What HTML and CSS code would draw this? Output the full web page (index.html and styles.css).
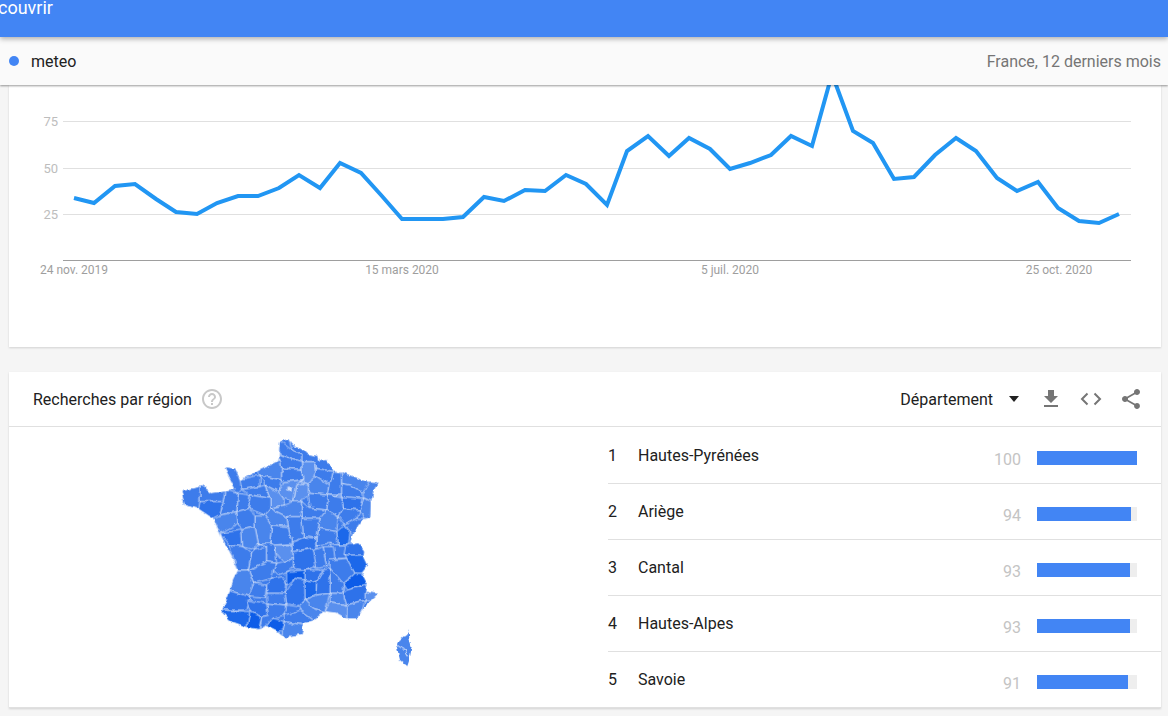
FILE: index.html
```html
<!DOCTYPE html>
<html lang="fr">
<head>
<meta charset="utf-8">
<title>Google Trends</title>
<link rel="stylesheet" href="styles.css">
</head>
<body>
<header class="topbar"><span class="topbar-title">couvrir</span></header>
<div class="termbar">
  <div class="term"><span class="term-dot"></span><span class="term-name">meteo</span></div>
  <div class="term-scope">France, 12 derniers mois</div>
</div>
<main class="page">
  <section class="card chart-card">
    <svg class="chart" width="1152" height="262" viewBox="9 85 1152 262">
      <line class="grid" x1="63" y1="121.5" x2="1131" y2="121.5"/>
      <line class="grid" x1="63" y1="168.5" x2="1131" y2="168.5"/>
      <line class="grid" x1="63" y1="214.5" x2="1131" y2="214.5"/>
      <line class="axis" x1="63" y1="260.5" x2="1131" y2="260.5"/>
      <text class="ylab" x="58" y="126">75</text>
      <text class="ylab" x="58" y="173">50</text>
      <text class="ylab" x="58" y="219">25</text>
      <text class="xlab" x="74" y="274">24 nov. 2019</text>
      <text class="xlab" x="402" y="274">15 mars 2020</text>
      <text class="xlab" x="730" y="274">5 juil. 2020</text>
      <text class="xlab" x="1059" y="274">25 oct. 2020</text>
      <polyline class="trend" points="74,198 94,203 115,186 135,184 156,199 176,212 197,214 217,203 238,196 258,196 279,188 299,175 320,188 340,163 361,173 381,195 402,219 422,219 443,219 463,217 484,197 504,201 525,190 545,191 566,175 586,184 607,205 627,151 648,136 669,156 689,138 710,149 730,169 750,163 771,155 791,136 812,146 832,74 853,131 873,143 894,179 914,177 935,155 956,138 976,151 997,178 1017,191 1038,182 1058,208 1079,221 1099,223 1119,214"/>
    </svg>
  </section>
  <section class="card region-card">
    <div class="region-head">
      <div class="region-title"><span>Recherches par région</span>
        <svg class="icon help" viewBox="0 0 24 24"><path d="M11 18h2v-2h-2v2zm1-16C6.48 2 2 6.48 2 12s4.48 10 10 10 10-4.48 10-10S17.52 2 12 2zm0 18c-4.41 0-8-3.59-8-8s3.59-8 8-8 8 3.59 8 8-3.59 8-8 8zm0-14c-2.21 0-4 1.79-4 4h2c0-1.1.9-2 2-2s2 .9 2 2c0 2-3 1.75-3 5h2c0-2.25 3-2.5 3-5 0-2.21-1.79-4-4-4z"/></svg>
      </div>
      <div class="region-tools">
        <span class="select-label">Département</span><span class="caret"></span>
        <svg class="icon tool" viewBox="0 0 24 24"><path d="M19 9h-4V3H9v6H5l7 7 7-7zM5 18v2h14v-2H5z"/></svg>
        <svg class="icon tool code" viewBox="0 0 24 24"><path d="M8.500 6.500 3 12l5.500 5.500M15.500 6.500 21 12l-5.500 5.500"/></svg>
        <svg class="icon tool" viewBox="0 0 24 24"><path d="M18 16.080c-.76 0-1.440.3-1.960.77L8.910 12.700c.05-.23.09-.46.09-.7s-.04-.47-.09-.7l7.050-4.110c.54.5 1.250.81 2.040.81 1.660 0 3-1.340 3-3s-1.340-3-3-3-3 1.340-3 3c0 .24.04.47.09.7L8.040 9.810C7.500 9.310 6.790 9 6 9c-1.660 0-3 1.340-3 3s1.340 3 3 3c.79 0 1.500-.31 2.040-.81l7.120 4.160c-.05.21-.08.43-.08.65 0 1.610 1.310 2.920 2.920 2.920 1.610 0 2.920-1.310 2.920-2.920s-1.310-2.920-2.920-2.920z"/></svg>
      </div>
    </div>
    <div class="region-body">
      <div class="map-pane">
        <svg class="map" width="260" height="240" viewBox="0 0 780 720">
          <defs>
            <filter id="wiggle" x="-5%" y="-5%" width="110%" height="110%">
              <feTurbulence type="fractalNoise" baseFrequency="0.045" numOctaves="3" seed="4"/>
              <feDisplacementMap in="SourceGraphic" scale="14" xChannelSelector="R" yChannelSelector="G"/>
            </filter>
            <clipPath id="fr"><path d="M330,35 345,30 355,28 368,45 395,55 412,72 440,78 445,95 468,90 490,125 520,128 560,145 590,155 622,157 610,185 602,215 600,262 575,270 545,320 540,345 565,340 582,362 580,380 592,405 575,430 590,460 585,485 625,492 605,510 585,530 560,565 530,565 500,548 465,543 430,570 400,580 395,615 345,622 320,600 290,585 270,598 230,590 180,572 155,545 175,500 190,450 205,420 180,370 150,310 130,265 85,235 45,225 35,185 90,170 100,168 125,190 165,185 197,178 165,113 195,116 210,150 262,125 325,95Z"/></clipPath>
          </defs>
          <g filter="url(#wiggle)">
          <g class="depts" clip-path="url(#fr)">
            <path class="d3" d="M0,0H780V720H0Z"/>
            <polygon class="d3" points="355,20 400,50 440,70 475,85 490,125 440,115 435,95 395,95 395,72 365,60"/>
            <polygon class="d3" points="320,25 365,60 395,72 395,95 330,72"/>
            <polygon class="d3" points="325,72 395,95 395,118 335,115"/>
            <polygon class="d2" points="255,120 330,90 335,115 335,150 270,135"/>
            <polygon class="d1" points="395,95 435,95 440,135 415,165 398,160"/>
            <polygon class="d3" points="335,115 395,118 398,150 345,155 335,150"/>
            <polygon class="d3" points="440,115 490,125 480,165 435,135"/>
            <polygon class="d2" points="435,135 480,165 475,195 415,190 415,165"/>
            <polygon class="d3" points="490,125 515,130 515,195 475,195 480,165"/>
            <polygon class="d3" points="515,160 540,165 585,190 580,205 515,200"/>
            <polygon class="d2" points="515,125 560,140 600,155 585,190 540,165 515,160"/>
            <polygon class="d2" points="600,150 630,150 605,215 585,205 575,195"/>
            <polygon class="d2" points="580,205 610,215 605,268 580,265 570,240"/>
            <polygon class="d4" points="515,200 580,205 570,240 520,235"/>
            <polygon class="d3" points="475,195 515,200 520,235 505,260 470,240"/>
            <polygon class="d3" points="415,190 475,195 470,240 420,235"/>
            <polygon class="d1" points="398,160 415,165 415,190 395,215 370,220 380,165"/>
            <polygon class="d1" points="345,155 398,150 380,165 370,215 340,205 325,185"/>
            <polygon class="d3" points="270,135 335,150 325,185 285,165"/>
            <polygon class="d3" points="205,150 270,135 270,170 215,178"/>
            <polygon class="d3" points="155,105 200,105 210,150 215,178 205,190 190,178"/>
            <polygon class="d3" points="215,178 270,170 285,165 300,205 240,195"/>
            <polygon class="d1" points="285,165 325,185 340,205 345,225 300,235 300,205"/>
            <polygon class="d2" points="345,225 370,215 395,215 395,260 350,260 300,235"/>
            <polygon class="d3" points="395,215 420,235 470,240 450,265 395,265"/>
            <polygon class="d2" points="470,240 505,260 500,305 445,295 450,265"/>
            <polygon class="d3" points="505,260 520,235 570,240 560,265 525,285"/>
            <polygon class="d3" points="525,285 560,265 585,265 550,320 540,305"/>
            <polygon class="d5" points="500,305 525,285 540,305 535,345 505,345"/>
            <polygon class="d3" points="480,340 505,345 535,345 530,385 495,385"/>
            <polygon class="d3" points="445,295 500,305 505,345 480,340 440,345"/>
            <polygon class="d3" points="395,265 450,265 445,295 440,325 400,320"/>
            <polygon class="d3" points="350,260 395,260 400,320 365,340 355,290"/>
            <polygon class="d2" points="300,235 350,260 355,290 305,285 285,255"/>
            <polygon class="d2" points="255,255 285,255 305,285 300,340 265,340 255,290"/>
            <polygon class="d3" points="240,195 300,205 300,235 285,255 235,235"/>
            <polygon class="d3" points="205,190 240,195 235,235 200,245"/>
            <polygon class="d3" points="30,175 90,165 90,225 85,240 30,230"/>
            <polygon class="d3" points="90,165 125,185 165,180 160,215 90,215"/>
            <polygon class="d4" points="90,215 160,215 150,255 135,270 85,240"/>
            <polygon class="d3" points="165,180 205,190 200,245 150,255 160,215"/>
            <polygon class="d2" points="130,265 150,255 200,245 205,280 150,310"/>
            <polygon class="d3" points="200,245 235,235 255,255 255,290 215,300 205,280"/>
            <polygon class="d4" points="150,310 215,300 218,350 180,345"/>
            <polygon class="d2" points="215,300 255,290 265,340 255,360 218,350"/>
            <polygon class="d3" points="180,345 218,350 245,370 235,420 205,420 185,370"/>
            <polygon class="d3" points="245,370 255,360 290,350 290,395 235,420"/>
            <polygon class="d3" points="265,340 300,340 315,345 320,400 290,395 290,350"/>
            <polygon class="d1" points="315,345 365,345 370,385 340,395 320,370"/>
            <polygon class="d3" points="305,285 355,290 365,340 315,345 300,340"/>
            <polygon class="d4" points="365,340 400,320 440,325 440,360 420,355 370,365"/>
            <polygon class="d4" points="370,365 430,355 440,410 405,420 370,415"/>
            <polygon class="d3" points="320,400 340,395 370,385 370,415 350,425 325,435 310,420"/>
            <polygon class="d3" points="235,420 290,395 320,400 310,420 305,445 250,460"/>
            <polygon class="d2" points="180,440 205,420 235,420 250,460 240,500 170,480"/>
            <polygon class="d4" points="170,480 240,500 230,540 150,540"/>
            <polygon class="d5" points="150,540 240,545 230,595 175,575"/>
            <polygon class="d6" points="240,545 275,560 265,600 230,595"/>
            <polygon class="d4" points="230,510 290,520 295,555 275,560 240,545"/>
            <polygon class="d3" points="250,460 290,465 285,505 235,500"/>
            <polygon class="d4" points="305,445 340,440 350,465 345,490 290,490 290,465"/>
            <polygon class="d6" points="350,425 405,420 405,450 375,445 350,465"/>
            <polygon class="d4" points="345,490 375,445 405,450 405,510 385,530 350,525"/>
            <polygon class="d5" points="405,450 440,455 438,495 405,510"/>
            <polygon class="d4" points="405,420 460,420 440,455 405,450"/>
            <polygon class="d3" points="430,360 460,350 470,410 440,415"/>
            <polygon class="d3" points="460,350 490,350 495,385 470,410"/>
            <polygon class="d3" points="480,390 530,385 555,430 520,460 480,415"/>
            <polygon class="d5" points="525,375 590,375 595,405 575,430 555,430"/>
            <polygon class="d4" points="530,345 570,335 590,375 525,375"/>
            <polygon class="d6" points="520,465 555,430 575,430 595,460 530,480"/>
            <polygon class="d3" points="480,415 520,460 520,490 480,490"/>
            <polygon class="d4" points="460,420 480,415 480,490 438,495 440,455"/>
            <polygon class="d2" points="405,510 438,495 480,490 465,545 430,535"/>
            <polygon class="d2" points="480,490 520,490 530,525 480,515"/>
            <polygon class="d4" points="520,490 530,480 590,465 585,510 530,525"/>
            <polygon class="d1" points="585,485 630,490 605,515 585,510"/>
            <polygon class="d2" points="530,525 585,510 565,570 530,570"/>
            <polygon class="d1" points="465,545 480,515 530,525 530,570 500,550"/>
            <polygon class="d2" points="385,530 405,510 430,535 465,545 430,570 390,540"/>
            <polygon class="d3" points="290,490 345,490 350,525 290,520"/>
            <polygon class="d3" points="290,520 350,525 345,555 305,565 290,585 270,598 275,560 295,555"/>
            <polygon class="d6" points="290,585 305,565 345,575 340,600 320,605"/>
            <polygon class="d3" points="345,555 390,540 430,570 400,585 345,575"/>
            <polygon class="d2" points="340,600 345,575 400,585 400,625 340,630"/>
          </g>
          <path class="corsica" d="M715,598 718,625 725,650 718,690 712,708 690,690 678,640 700,620 712,615Z"/>
          <path class="corsica-line" d="M680,645 705,660 716,678"/>
          <path class="paris" d="M352,170h16v12h-16z"/>
          </g>
        </svg>
      </div>
      <ol class="ranking">
        <li class="rank-row"><span class="rank">1</span><span class="place">Hautes-Pyrénées</span><span class="score">100</span><span class="bar"><span class="bar-fill" style="width:100%"></span></span></li>
        <li class="rank-row"><span class="rank">2</span><span class="place">Ariège</span><span class="score">94</span><span class="bar"><span class="bar-fill" style="width:94%"></span></span></li>
        <li class="rank-row"><span class="rank">3</span><span class="place">Cantal</span><span class="score">93</span><span class="bar"><span class="bar-fill" style="width:93%"></span></span></li>
        <li class="rank-row"><span class="rank">4</span><span class="place">Hautes-Alpes</span><span class="score">93</span><span class="bar"><span class="bar-fill" style="width:93%"></span></span></li>
        <li class="rank-row"><span class="rank">5</span><span class="place">Savoie</span><span class="score">91</span><span class="bar"><span class="bar-fill" style="width:91%"></span></span></li>
      </ol>
    </div>
  </section>
</main>
</body>
</html>
```
FILE: styles.css
```css
html, body { margin: 0; height: 716px; overflow: hidden; }
body { background: #f5f5f5; font-family: Roboto, "Liberation Sans", sans-serif; color: #212121; }

.topbar { position: relative; z-index: 3; height: 37px; background: #4285f4; box-shadow: 0 2px 5px rgba(0,0,0,.3); overflow: hidden; }
.topbar-title { display: block; margin: -4px 0 0 -2px; color: #fff; font-size: 18px; line-height: 24px; }

.termbar { position: relative; z-index: 2; height: 48px; box-sizing: border-box; padding: 0 7px 0 9px; display: flex; align-items: center; justify-content: space-between; background: #fafafa; box-shadow: 0 1px 2px rgba(0,0,0,.4); }
.term { display: flex; align-items: center; }
.term-dot { width: 10px; height: 10px; border-radius: 50%; background: #4285f4; margin-right: 12px; }
.term-name { font-size: 16px; }
.term-scope { font-size: 16px; color: #757575; }

.page { padding: 0 7px 0 9px; }
.card { background: #fff; box-shadow: 0 1px 2px rgba(0,0,0,.15); }
.chart-card { height: 262px; margin-bottom: 25px; }
.chart { display: block; overflow: visible; }
.grid { stroke: #e0e0e0; stroke-width: 1; }
.axis { stroke: #9e9e9e; stroke-width: 1; }
.trend { fill: none; stroke: #2196f3; stroke-width: 4; stroke-linejoin: miter; }
.ylab { font-size: 13px; fill: #bdbdbd; text-anchor: end; }
.xlab { font-size: 12px; fill: #9e9e9e; text-anchor: middle; }

.region-head { height: 54px; border-bottom: 1px solid #e0e0e0; padding: 0 18px 0 24px; display: flex; align-items: center; justify-content: space-between; }
.region-title { display: flex; align-items: center; font-size: 16px; }
.icon { display: block; width: 24px; height: 24px; }
.help { fill: #c8c8c8; margin-left: 8px; }
.region-tools { display: flex; align-items: center; }
.select-label { font-size: 16px; }
.caret { width: 0; height: 0; border-style: solid; border-width: 6px 5.500px 0; border-color: #212121 transparent transparent; margin: 0 20px 0 16px; }
.tool { fill: #757575; }
.tool + .tool { margin-left: 16px; }
.code { fill: none; stroke: #757575; stroke-width: 2; }

.region-body { display: flex; height: 280px; border-bottom: 1px solid #e0e0e0; }
.map-pane { width: 599px; }
.map { display: block; margin: 3px 0 0 161px; overflow: visible; }
.depts polygon { stroke: #fff; stroke-width: 2.200; stroke-opacity: .85; stroke-linejoin: round; }
.d1 { fill: #5a90ee; }
.d2 { fill: #4a85ec; }
.d3 { fill: #3d7ceb; }
.d4 { fill: #2f72ea; }
.d5 { fill: #1a68ea; }
.d6 { fill: #0a5ce8; }
.corsica { fill: #4a85ec; }
.corsica-line { fill: none; stroke: #fff; stroke-width: 2.500; }
.paris { fill: #fff; opacity: .7; }

.ranking { flex: 1; margin: 0; padding: 1px 0 0; list-style: none; }
.rank-row { height: 55px; border-bottom: 1px solid #e0e0e0; display: flex; align-items: center; font-size: 16px; }
.rank-row:last-child { border-bottom: 0; }
.rank { width: 30px; }
.place { flex: 1; }
.score { width: 60px; margin-right: 16px; text-align: right; color: #c4c4c4; font-size: 16px; position: relative; top: 4px; }
.bar { display: block; width: 100px; height: 14px; margin: 5px 24px 0 0; background: #eee; }
.bar-fill { display: block; height: 100%; background: #4285f4; }
```
